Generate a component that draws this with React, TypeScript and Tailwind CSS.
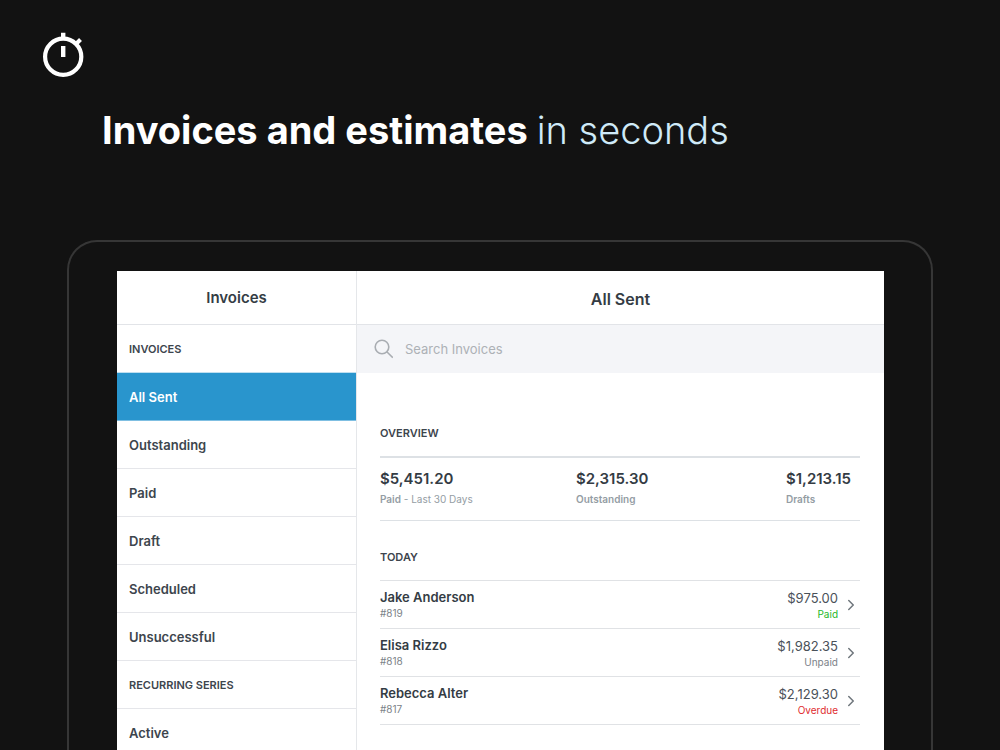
import { ChevronRight } from 'lucide-react';

const invoiceFilters = ['All Sent', 'Outstanding', 'Paid', 'Draft', 'Scheduled', 'Unsuccessful'];

const stats = [
  { amount: '$5,451.20', label: 'Paid', note: ' - Last 30 Days' },
  { amount: '$2,315.30', label: 'Outstanding', note: '' },
  { amount: '$1,213.15', label: 'Drafts', note: '' },
];

const invoices = [
  { name: 'Jake Anderson', number: '#819', amount: '$975.00', status: 'Paid', color: 'text-[#25b82b]' },
  { name: 'Elisa Rizzo', number: '#818', amount: '$1,982.35', status: 'Unpaid', color: 'text-[#7b8288]' },
  { name: 'Rebecca Alter', number: '#817', amount: '$2,129.30', status: 'Overdue', color: 'text-[#e02b2f]' },
];

function StopwatchLogo() {
  return (
    <svg className="h-12 w-12" viewBox="0 0 48 48" fill="none" stroke="white" aria-hidden="true">
      <circle cx="21.2" cy="24.8" r="18.1" strokeWidth="4.2" />
      <path d="M21.2 0.7v6M21.2 14v11" strokeWidth="4.4" />
      <path d="M33.5 12.5l5-5" strokeWidth="4" />
    </svg>
  );
}

function SectionLabel({ children }: { children: string }) {
  return <h3 className="text-[11px] leading-4 font-semibold uppercase text-[#3d454d]">{children}</h3>;
}

function NavItem({ label, active = false }: { label: string; active?: boolean }) {
  return (
    <li>
      <a
        href="#"
        aria-current={active ? 'page' : undefined}
        className={
          active
            ? 'flex h-12 items-center border-b border-[#7fbfe2] bg-[#2995cd] px-3 pt-0.5 text-[13px] font-semibold text-white'
            : 'flex h-12 items-center border-b border-[#e5e6ea] px-3 pt-0.5 text-[13px] font-semibold text-[#3d454d]'
        }
      >
        {label}
      </a>
    </li>
  );
}

function Sidebar() {
  return (
    <aside className="w-60 shrink-0 border-r border-[#e5e7ea]">
      <div className="flex h-[54px] items-center justify-center border-b border-[#e2e4e8] pt-0.5">
        <h2 className="text-[15px] font-semibold">Invoices</h2>
      </div>
      <nav>
        <div className="flex h-12 items-center border-b border-[#bfdff0] px-3">
          <SectionLabel>Invoices</SectionLabel>
        </div>
        <ul>
          {invoiceFilters.map((label) => (
            <NavItem key={label} label={label} active={label === 'All Sent'} />
          ))}
        </ul>
        <div className="flex h-12 items-center border-b border-[#e5e6ea] px-3">
          <SectionLabel>Recurring Series</SectionLabel>
        </div>
        <ul>
          <NavItem label="Active" />
        </ul>
      </nav>
    </aside>
  );
}

function SearchBar() {
  return (
    <label className="flex h-12 items-center gap-3 bg-[#f4f5f8] px-4">
      <svg className="h-5 w-5 shrink-0" viewBox="0 0 20 20" fill="none" stroke="#a9adb2" strokeWidth="1.6" aria-hidden="true">
        <circle cx="9" cy="8" r="6.8" />
        <path d="M13.8 12.8l6 6" />
      </svg>
      <input
        type="text"
        aria-label="Search Invoices"
        placeholder="Search Invoices"
        className="min-w-0 flex-1 bg-transparent pt-0.5 text-[13px] text-[#3d454d] outline-none placeholder:text-[#adb1b6]"
      />
    </label>
  );
}

function Overview() {
  return (
    <section>
      <SectionLabel>Overview</SectionLabel>
      <div className="mt-[15px] grid h-[65px] grid-cols-[196fr_210fr_74fr] items-center border-t-2 border-b border-[#dde1e5]">
        {stats.map((stat) => (
          <div key={stat.label}>
            <p className="text-[15px] leading-5 font-semibold">{stat.amount}</p>
            <p className="text-[10px] leading-5 whitespace-nowrap text-[#949da4]">
              <span className="font-semibold">{stat.label}</span>
              {stat.note}
            </p>
          </div>
        ))}
      </div>
    </section>
  );
}

function Today() {
  return (
    <section className="mt-7">
      <SectionLabel>Today</SectionLabel>
      <ul className="mt-[15px] border-t border-[#e0e2e5]">
        {invoices.map((invoice) => (
          <li key={invoice.number} className="border-b border-[#e0e2e5]">
            <button type="button" className="flex h-[47px] w-full items-center text-left">
              <span className="flex flex-1 flex-col">
                <span className="text-[13px] leading-4 font-semibold">{invoice.name}</span>
                <span className="text-[10px] leading-4 text-[#7b8288]">{invoice.number}</span>
              </span>
              <span className="flex flex-col pt-0.5 text-right">
                <span className="text-[13px] leading-4 text-[#4a5159]">{invoice.amount}</span>
                <span className={`text-[10px] leading-4 ${invoice.color}`}>{invoice.status}</span>
              </span>
              <ChevronRight className="ml-1 h-[18px] w-[18px] text-[#6f767c]" strokeWidth={2} />
            </button>
          </li>
        ))}
      </ul>
    </section>
  );
}

export default function App() {
  return (
    <div className="flex h-screen flex-col overflow-hidden bg-[#121212] font-['Inter',sans-serif]">
      <header className="px-[42px] pt-8">
        <StopwatchLogo />
        <h1 className="mt-6 ml-[60px] text-[38px] leading-[52px] font-bold text-white">
          Invoices and estimates <span className="font-light text-[#cfeaf8]">in seconds</span>
        </h1>
      </header>

      <div className="mx-[67px] mt-[84px] flex min-h-0 flex-1 rounded-t-[30px] border-2 border-b-0 border-[#363636] pt-[29px] pr-[47px] pl-12">
        <div className="flex min-w-0 flex-1 bg-white text-[#343c44]">
          <Sidebar />
          <main className="min-w-0 flex-1">
            <div className="flex h-[54px] items-center justify-center border-b border-[#e2e4e8] pt-0.5">
              <h2 className="text-base font-semibold">All Sent</h2>
            </div>
            <SearchBar />
            <div className="pt-[52px] pr-6 pl-[23px]">
              <Overview />
              <Today />
            </div>
          </main>
        </div>
      </div>
    </div>
  );
}
